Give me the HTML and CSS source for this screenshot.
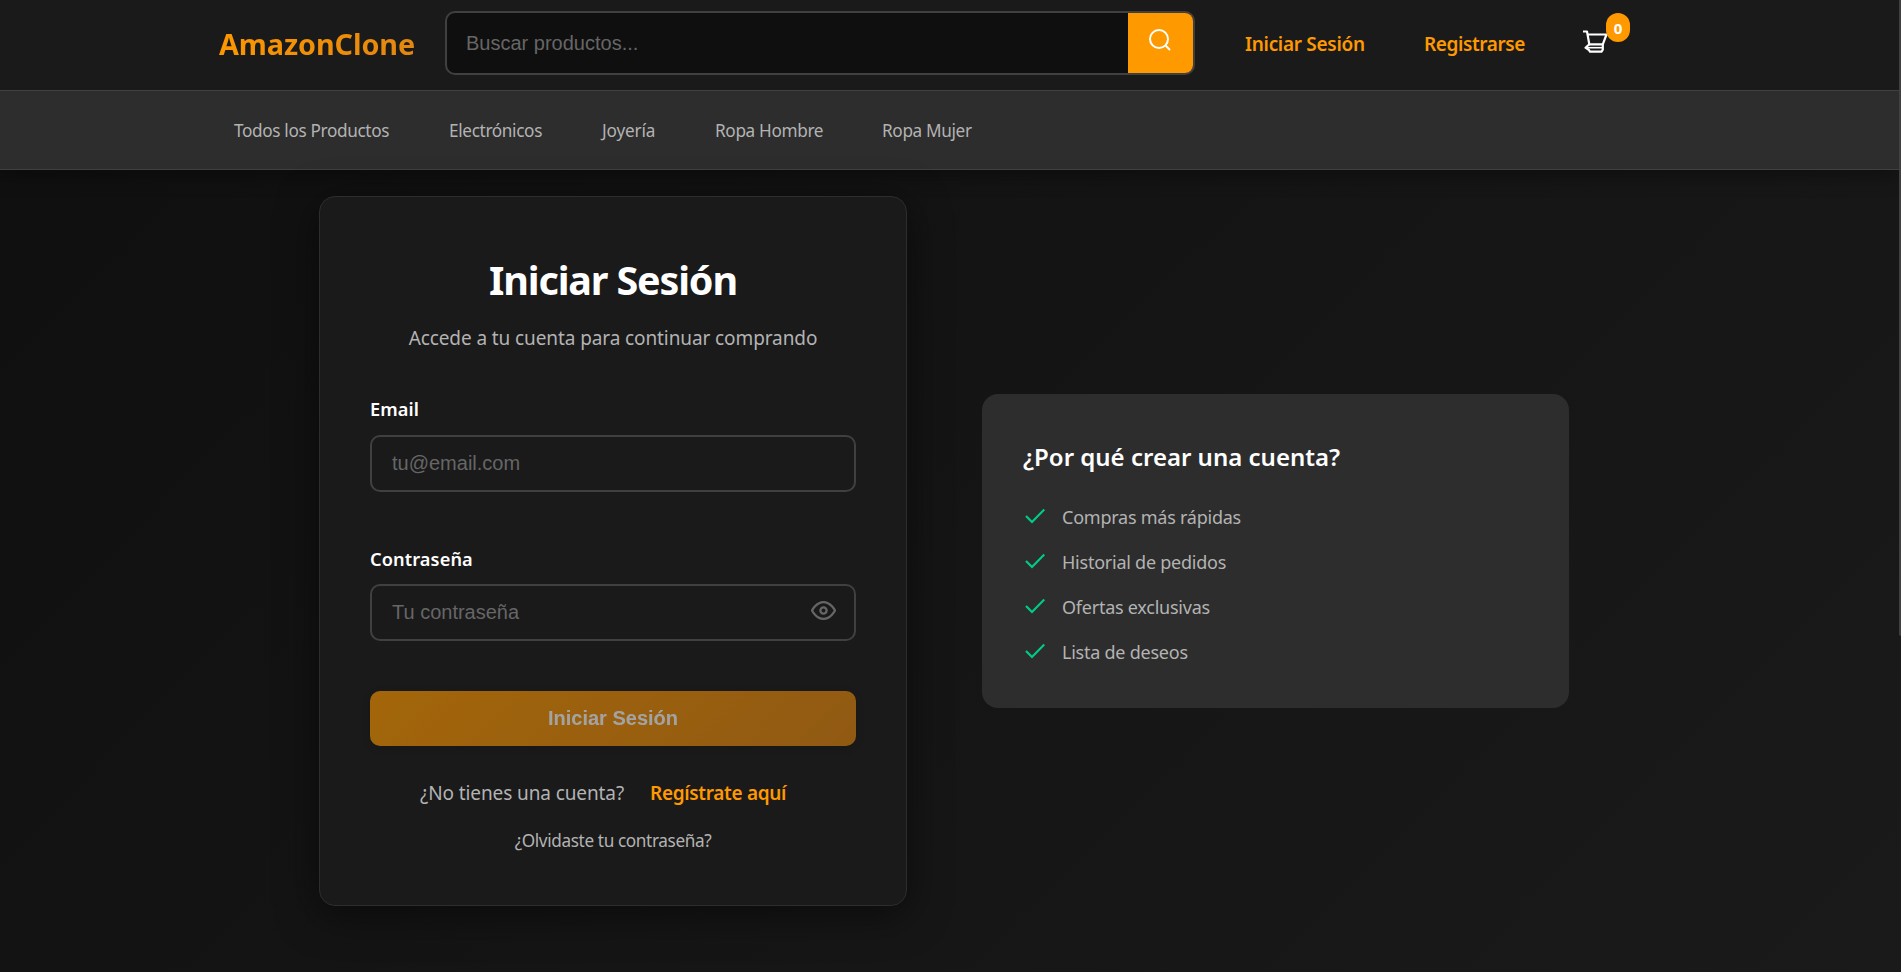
FILE: index.html
```html
<!DOCTYPE html>
<html lang="es">
<head>
<meta charset="utf-8">
<title>AmazonClone</title>
<link rel="stylesheet" href="styles.css">
</head>
<body>
<div class="page">
<header class="header">
  <div class="topbar">
    <a class="logo"><span class="logo-text">AmazonClone</span></a>
    <form class="search">
      <input class="search-input" type="text" placeholder="Buscar productos...">
      <button class="search-btn" type="button" aria-label="Buscar">
        <svg width="24" height="24" viewBox="0 0 24 24" fill="none" stroke="#fff" stroke-width="2"><circle cx="11" cy="11" r="9"/><path d="M17.3 17.3 22 22"/></svg>
      </button>
    </form>
    <nav class="account">
      <a class="link link-login"><span>Iniciar Sesión</span></a>
      <a class="link link-register"><span>Registrarse</span></a>
    </nav>
    <div class="cart">
      <svg width="26" height="24" viewBox="0 0 26 24" fill="none" stroke="#fff" stroke-width="2.200" stroke-linejoin="round"><path d="M0 1.500h4l2.300 12.800h13.500L23.500 4.500H4.500"/><path d="M6.300 14.300 2.500 17.700l3.500 2.300 1 1.700h11.500l1.300-2v-5.400"/><path d="M4 17.700h15.500" stroke-width="1.600"/></svg>
      <span class="badge">0</span>
    </div>
  </div>
  <nav class="categories">
    <a class="cat c1">Todos los Productos</a>
    <a class="cat c2">Electrónicos</a>
    <a class="cat c3">Joyería</a>
    <a class="cat c4">Ropa Hombre</a>
    <a class="cat c5">Ropa Mujer</a>
  </nav>
</header>
<main class="main">
  <section class="card">
    <h1 class="title"><span>Iniciar Sesión</span></h1>
    <p class="subtitle"><span>Accede a tu cuenta para continuar comprando</span></p>
    <label class="label label-email"><span>Email</span></label>
    <div class="field"><input class="input" type="email" placeholder="tu@email.com"></div>
    <label class="label label-pass"><span>Contraseña</span></label>
    <div class="field field-pass"><input class="input" type="password" placeholder="Tu contraseña">
      <svg class="eye" width="25" height="25" viewBox="0 0 24 24" fill="none" stroke="#666" stroke-width="2.200"><path d="M1 12s4-8 11-8 11 8 11 8-4 8-11 8-11-8-11-8z"/><circle cx="12" cy="12" r="3"/></svg>
    </div>
    <button class="submit" type="button">Iniciar Sesión</button>
    <p class="signup"><span class="ask">¿No tienes una cuenta?</span><a class="join">Regístrate aquí</a></p>
    <p class="forgot"><span>¿Olvidaste tu contraseña?</span></p>
  </section>
  <aside class="benefits">
    <h2 class="why"><span>¿Por qué crear una cuenta?</span></h2>
    <ul class="list">
      <li><svg class="check" viewBox="0 0 20 18"><path d="M1 9l6 6L19.300 2.500"/></svg><span>Compras más rápidas</span></li>
      <li><svg class="check" viewBox="0 0 20 18"><path d="M1 9l6 6L19.300 2.500"/></svg><span>Historial de pedidos</span></li>
      <li><svg class="check" viewBox="0 0 20 18"><path d="M1 9l6 6L19.300 2.500"/></svg><span>Ofertas exclusivas</span></li>
      <li><svg class="check" viewBox="0 0 20 18"><path d="M1 9l6 6L19.300 2.500"/></svg><span>Lista de deseos</span></li>
    </ul>
  </aside>
</main>
</div>
<div class="scroll-thumb"></div>
</body>
</html>
```
FILE: styles.css
```css
* { box-sizing: border-box; }
body {
  margin: 0;
  display: flex;
  background: #1a1a1a;
  color: #fff;
  font-family: "Noto Sans", "Open Sans", sans-serif;
  overflow: hidden;
}
.page {
  width: 1899px;
  height: 972px;
  flex: none;
  display: flex;
  flex-direction: column;
  background: linear-gradient(135deg, #0f0f0f 0%, #1a1a1a 100%);
}
.scroll-thumb { width: 2px; height: 636px; background: #404040; border-radius: 0 0 0 2px; }
.header { height: 170px; flex: none; box-shadow: 0 4px 20px rgba(0, 0, 0, .4); }
.topbar {
  height: 90px;
  padding: 11px 0 0 219px;
  display: flex;
  align-items: flex-start;
  background: #1a1a1a;
}
.logo { width: 226px; height: 64px; display: flex; align-items: center; }
.logo-text {
  font-size: 28.8px;
  font-weight: 700;
  letter-spacing: -.1px;
  background: linear-gradient(135deg, #ff9900, #e08510);
  -webkit-background-clip: text;
  background-clip: text;
  color: transparent;
}
.search {
  width: 750px;
  height: 64px;
  display: flex;
  border: 2px solid #404040;
  border-radius: 10px;
  overflow: hidden;
  background: #0f0f0f;
}
.search-input {
  flex: 1;
  border: 0;
  padding: 0 20px 0 19px;
  background: transparent;
  font: 20px "Liberation Sans", sans-serif;
}
.search-input::placeholder, .input::placeholder { color: #666; opacity: 1; }
.search-btn {
  width: 65px;
  border: 0;
  padding: 0 2px 6px 0;
  background: #ff9900;
  display: flex;
  align-items: center;
  justify-content: center;
}
.account { display: flex; height: 64px; padding-top: 2px; align-items: center; color: #ff9900; font-size: 19px; font-weight: 600; }
.link-login { margin-left: 50px; width: 179px; letter-spacing: -.3px; }
.link-register { width: 158px; letter-spacing: -.4px; }
.cart { position: relative; width: 50px; height: 64px; margin-left: 1px; padding-top: 19px; }
.badge {
  position: absolute;
  left: 23px;
  top: 2px;
  width: 24px;
  height: 29px;
  border-radius: 12px;
  background: #ff9900;
  font-size: 15px;
  font-weight: 700;
  line-height: 31px;
  text-align: center;
}
.categories {
  height: 80px;
  padding-left: 234px;
  display: flex;
  align-items: center;
  background: #2d2d2d;
  border-top: 1px solid #404040;
  border-bottom: 1px solid #404040;
  color: #b3b3b3;
  font-size: 17.2px;
  letter-spacing: -.35px;
  white-space: nowrap;
}
.c1 { width: 215px; }
.c2 { width: 153px; }
.c3 { width: 113px; letter-spacing: -.15px; }
.c4 { width: 167px; }
.main { flex: 1; display: flex; align-items: flex-start; padding: 26px 0 0 319px; gap: 75px; }
.card {
  width: 588px;
  height: 710px;
  padding: 0 50px;
  background: #1a1a1a;
  border: 1px solid #2d2d2d;
  border-radius: 16px;
  box-shadow: 0 8px 40px rgba(0, 0, 0, .5);
}
.title { margin: 54px 0 0; height: 60px; line-height: 59px; font-size: 39.5px; letter-spacing: -1.15px; font-weight: 700; text-align: center; white-space: nowrap; }
.subtitle { margin: 11px 0 0; height: 33px; line-height: 32px; font-size: 19px; letter-spacing: -.1px; text-align: center; color: #b3b3b3; white-space: nowrap; }
.label { display: block; height: 28px; line-height: 29px; font-size: 18.2px; letter-spacing: .1px; font-weight: 600; margin-top: 40px; }
.label-pass { margin-top: 53px; line-height: 28px; }
.field { display: flex; position: relative; margin-top: 12px; }
.field-pass { margin-top: 11px; }
.input {
  width: 486px;
  height: 57px;
  border: 2px solid #404040;
  border-radius: 10px;
  padding: 0 20px;
  background: #1a1a1a;
  font: 20px "Liberation Sans", sans-serif;
}
.eye { position: absolute; right: 20px; top: 14px; }
.submit {
  display: block;
  width: 486px;
  height: 55px;
  margin-top: 50px;
  border: 0;
  border-radius: 10px;
  background: linear-gradient(135deg, #ff9900, #e08510);
  opacity: .6;
  color: #fff;
  font: 700 20px "Liberation Sans", sans-serif;
  box-shadow: 0 2px 10px rgba(0, 0, 0, .2);
}
.signup { margin: 31px 0 0; height: 32px; line-height: 32px; padding-left: 50px; display: flex; font-size: 19px; color: #b3b3b3; white-space: nowrap; }
.ask { width: 230px; letter-spacing: -.1px; }
.join { color: #ff9900; font-weight: 600; letter-spacing: -.32px; }
.forgot { margin: 17px 0 0; height: 30px; line-height: 30px; font-size: 17.2px; letter-spacing: -.38px; text-align: center; color: #b3b3b3; white-space: nowrap; }
.benefits { width: 587px; height: 314px; margin-top: 198px; padding: 42px 41px 0; background: #2d2d2d; border-radius: 16px; }
.why { margin: 0; height: 42px; line-height: 42px; font-size: 24px; font-weight: 600; white-space: nowrap; }
.list { margin: 16px 0 0; padding: 0; list-style: none; font-size: 18px; letter-spacing: -.24px; color: #b3b3b3; }
.list li { display: flex; align-items: center; height: 45px; gap: 17px; padding-left: 2px; white-space: nowrap; }
.check { width: 20px; height: 18px; margin-bottom: 2px; fill: none; stroke: #00cc88; stroke-width: 2.2; }
```
